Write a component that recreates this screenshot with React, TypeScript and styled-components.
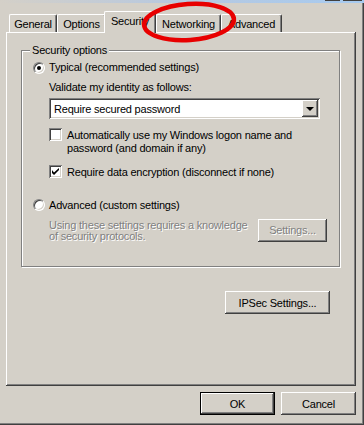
import React from "react";
import styled, { createGlobalStyle } from "styled-components";

const GlobalStyle = createGlobalStyle`
    html, body {
        margin: 0;
        padding: 0;
        background: #d4d0c8;
    }
    body {
        font-family: "Liberation Sans", Arial, sans-serif;
        font-size: 11px;
        letter-spacing: -0.2px;
        color: #000;
    }
`

const raised = `
    box-shadow: inset -1px -1px #404040, inset 1px 1px #ffffff,
        inset -2px -2px #808080, inset 2px 2px #d4d0c8;
`

const sunken = `
    box-shadow: inset 1px 1px #808080, inset -1px -1px #ffffff,
        inset 2px 2px #404040, inset -2px -2px #d4d0c8;
`

const Window = styled.div`
    position: relative;
    width: 364px;
    height: 425px;
    background: #d4d0c8;
    overflow: hidden;
    display: flex;
    flex-direction: column;
    box-shadow: inset -1px -1px #404040, inset -2px -2px #808080;
`

const TitleEdge = styled.div`
    height: 3px;
    display: flex;
    justify-content: flex-end;
    gap: 3px;
    padding-right: 2px;
    background: linear-gradient(to right, #d4d0c8 0%, #b9c9de 45%, #a6caf0 100%);
`

const TitleButton = styled.span<{ $w: number }>`
    width: ${p => p.$w}px;
    height: 1px;
    background: #404040;
`

const Body = styled.div`
    padding: 8px 0 0 6px;
    display: flex;
    flex-direction: column;
`

const TabRow = styled.div`
    display: flex;
    align-items: flex-end;
    height: 21px;
    padding-left: 3px;
    position: relative;
    z-index: 2;
`

const Tab = styled.div<{ $w: number; $active?: boolean }>`
    width: ${p => p.$w}px;
    height: ${p => (p.$active ? 22 : 18)}px;
    margin-left: ${p => (p.$active ? -2 : 0)}px;
    margin-bottom: ${p => (p.$active ? -1 : 0)}px;
    padding-bottom: ${p => (p.$active ? 3 : 0)}px;
    box-sizing: border-box;
    display: flex;
    align-items: center;
    justify-content: center;
    background: #d4d0c8;
    border-top: 1px solid #ffffff;
    border-left: 1px solid #ffffff;
    border-right: 1px solid #404040;
    border-radius: 2px 2px 0 0;
    box-shadow: inset -1px 0 #808080;
    position: relative;
    z-index: ${p => (p.$active ? 2 : 1)};
`

const Panel = styled.div`
    width: 350px;
    height: 354px;
    box-sizing: border-box;
    ${raised}
    padding: 18px 0 0 15px;
    display: flex;
    flex-direction: column;
`

const Group = styled.div`
    position: relative;
    width: 319px;
    height: 217px;
    box-sizing: border-box;
    border: 1px solid #808080;
    box-shadow: inset 1px 1px #ffffff, 1px 1px #ffffff;
    padding: 10px 0 0 11px;
    display: flex;
    flex-direction: column;
`

const Legend = styled.span`
    position: absolute;
    top: -7px;
    left: 8px;
    padding: 0 2px;
    line-height: 13px;
    background: #d4d0c8;
`

const OptionRow = styled.label<{ $mt?: number }>`
    display: flex;
    align-items: center;
    gap: 4px;
    height: 13px;
    line-height: 13px;
    margin-top: ${p => p.$mt ?? 0}px;
`

const Radio = styled.span<{ $on?: boolean }>`
    position: relative;
    width: 12px;
    height: 12px;
    box-sizing: border-box;
    border-radius: 50%;
    background: #ffffff;
    border: 1px solid;
    border-color: #808080 #ffffff #ffffff #808080;
    box-shadow: inset 1px 1px #404040, inset -1px -1px #d4d0c8;
    &::after {
        content: "";
        display: ${p => (p.$on ? "block" : "none")};
        position: absolute;
        left: 3px;
        top: 3px;
        width: 4px;
        height: 4px;
        border-radius: 50%;
        background: #000;
    }
`

const Indent = styled.div`
    padding-left: 16px;
    display: flex;
    flex-direction: column;
`

const Label = styled.div<{ $mt?: number }>`
    line-height: 13px;
    margin-top: ${p => p.$mt ?? 0}px;
`

const Select = styled.div`
    margin-top: 4px;
    width: 271px;
    height: 21px;
    box-sizing: border-box;
    background: #ffffff;
    ${sunken}
    display: flex;
    align-items: center;
    padding: 2px 2px 2px 5px;
`

const SelectText = styled.span`
    flex: 1;
`

const ArrowButton = styled.span`
    width: 16px;
    height: 17px;
    box-sizing: border-box;
    background: #d4d0c8;
    ${raised}
    display: flex;
    align-items: center;
    justify-content: center;
    &::after {
        content: "";
        border-left: 4px solid transparent;
        border-right: 4px solid transparent;
        border-top: 4px solid #000;
        margin-top: 1px;
    }
`

const CheckRow = styled.label<{ $mt: number }>`
    display: flex;
    align-items: flex-start;
    gap: 5px;
    margin-top: ${p => p.$mt}px;
    line-height: 12.5px;
`

const CheckBox = styled.span`
    flex: none;
    width: 13px;
    height: 13px;
    box-sizing: border-box;
    background: #ffffff;
    ${sunken}
    display: flex;
    align-items: center;
    justify-content: center;
    margin-top: -1px;
`

const DisabledRow = styled.div`
    display: flex;
    align-items: flex-start;
    justify-content: space-between;
    width: 278px;
    margin-top: 8px;
`

const DisabledText = styled.div`
    color: #808080;
    text-shadow: 1px 1px #ffffff;
    line-height: 11.5px;
`

const Button = styled.button<{ $w: number; $default?: boolean; $disabled?: boolean }>`
    width: ${p => p.$w}px;
    height: 23px;
    box-sizing: border-box;
    padding: 0;
    font: inherit;
    letter-spacing: inherit;
    background: #d4d0c8;
    color: ${p => (p.$disabled ? "#808080" : "#000")};
    text-shadow: ${p => (p.$disabled ? "1px 1px #ffffff" : "none")};
    border: ${p => (p.$default ? "1px solid #000" : "none")};
    ${raised}
    cursor: default;
`

const SettingsButton = styled(Button)`
    margin-top: -1px;
`

const IpsecRow = styled.div`
    display: flex;
    padding-left: 204px;
    margin-top: 24px;
`

const Footer = styled.div`
    display: flex;
    justify-content: flex-end;
    gap: 6px;
    padding: 6px 8px 0 0;
`

const Scribble = styled.svg`
    position: absolute;
    left: 139px;
    top: 0;
    pointer-events: none;
    z-index: 5;
`

export default function App() {
    return (
        <>
            <GlobalStyle />
            <Window>
                <TitleEdge>
                    <TitleButton $w={15} />
                    <TitleButton $w={19} />
                </TitleEdge>
                <Body>
                    <TabRow>
                        <Tab $w={48}>General</Tab>
                        <Tab $w={49}>Options</Tab>
                        <Tab $w={52} $active>Security</Tab>
                        <Tab $w={65}>Networking</Tab>
                        <Tab $w={61}>Advanced</Tab>
                    </TabRow>
                    <Panel>
                        <Group>
                            <Legend>Security options</Legend>
                            <OptionRow>
                                <Radio $on />
                                Typical (recommended settings)
                            </OptionRow>
                            <Indent>
                                <Label $mt={7}>Validate my identity as follows:</Label>
                                <Select>
                                    <SelectText>Require secured password</SelectText>
                                    <ArrowButton />
                                </Select>
                                <CheckRow $mt={10}>
                                    <CheckBox />
                                    <span>
                                        Automatically use my Windows logon name and
                                        <br />
                                        password (and domain if any)
                                    </span>
                                </CheckRow>
                                <CheckRow $mt={12}>
                                    <CheckBox>
                                        <svg width="7" height="7" viewBox="0 0 7 7">
                                            <path d="M0 2v3l2 2l5-5V-0L2 4.5z" fill="#000" />
                                        </svg>
                                    </CheckBox>
                                    <span>Require data encryption (disconnect if none)</span>
                                </CheckRow>
                            </Indent>
                            <OptionRow $mt={20}>
                                <Radio />
                                Advanced (custom settings)
                            </OptionRow>
                            <Indent>
                                <DisabledRow>
                                    <DisabledText>
                                        Using these settings requires a knowledge
                                        <br />
                                        of security protocols.
                                    </DisabledText>
                                    <SettingsButton $w={69} $disabled>Settings...</SettingsButton>
                                </DisabledRow>
                            </Indent>
                        </Group>
                        <IpsecRow>
                            <Button $w={105}>IPSec Settings...</Button>
                        </IpsecRow>
                    </Panel>
                </Body>
                <Footer>
                    <Button $w={75} $default>OK</Button>
                    <Button $w={75}>Cancel</Button>
                </Footer>
                <Scribble width="104" height="46" viewBox="0 0 104 46">
                    <ellipse cx="50" cy="22" rx="45" ry="18" fill="none" stroke="#e80000"
                        strokeWidth="4.5" transform="rotate(-4 50 22)" />
                </Scribble>
            </Window>
        </>
    );
}
